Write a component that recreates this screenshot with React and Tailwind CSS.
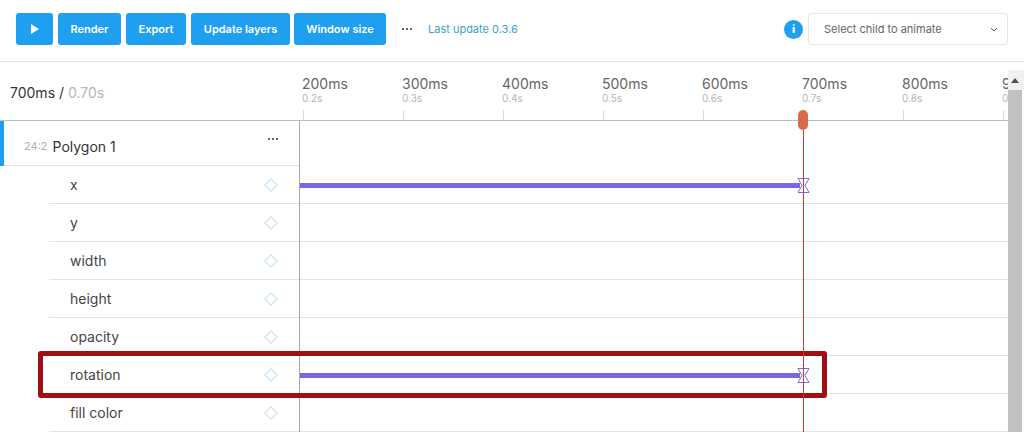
const ticks = [
  ["200ms", "0.2s"],
  ["300ms", "0.3s"],
  ["400ms", "0.4s"],
  ["500ms", "0.5s"],
  ["600ms", "0.6s"],
  ["700ms", "0.7s"],
  ["800ms", "0.8s"],
  ["900ms", "0.9s"],
];
const props = [
  ["x", true],
  ["y", false],
  ["width", false],
  ["height", false],
  ["opacity", false],
  ["rotation", true],
  ["fill color", false],
];

function Btn({ children, className }) {
  return (
    <button className={"h-8 rounded-[3px] bg-[#1f9ff0] text-white text-[11px] font-semibold flex items-center justify-center " + className}>
      {children}
    </button>
  );
}

function Dots({ className }) {
  return (
    <div className={"flex gap-[2px] " + className}>
      <span className="w-[2px] h-[2px] rounded-full bg-[#333]" />
      <span className="w-[2px] h-[2px] rounded-full bg-[#333]" />
      <span className="w-[2px] h-[2px] rounded-full bg-[#333]" />
    </div>
  );
}

function Diamond() {
  return (
    <svg width="14" height="14" viewBox="0 0 14 14" className="mr-[21px] shrink-0">
      <path d="M7 .8 13.2 7 7 13.2 .8 7Z" fill="none" stroke="#c5e2f2" strokeWidth="1.1" />
    </svg>
  );
}

function Track({ active }) {
  return (
    <div className="h-[38px] border-b border-[#e2e2e2] flex items-center relative">
      {active && (
        <>
          <div className="w-[500px] h-[5px] mt-[1px] bg-[#7b68e0]" />
          <svg width="13" height="15" viewBox="0 0 13 15" className="absolute left-[497px] top-[12px]">
            <path d="M1 .5H12L8 7.5 12 14.5H1L5 7.5Z" fill="#fff" stroke="#7b68e0" strokeWidth="1" />
          </svg>
        </>
      )}
    </div>
  );
}

export default function App() {
  return (
    <div className="w-[1024px] h-[432px] relative overflow-hidden bg-white font-['Inter',sans-serif]">
      <div className="h-[62px] border-b border-[#e4e4e4] flex items-center pl-4 pr-4 pb-[3px]">
        <Btn className="w-[37px]">
          <svg width="8" height="10" viewBox="0 0 8 10"><path d="M0 0 8 5 0 10Z" fill="#fff" /></svg>
        </Btn>
        <Btn className="w-[63px] ml-[5px]">Render</Btn>
        <Btn className="w-[60px] ml-[5px]">Export</Btn>
        <Btn className="w-[99px] ml-[5px]">Update layers</Btn>
        <Btn className="w-[92px] ml-[4px]">Window size</Btn>
        <Dots className="ml-[16px]" />
        <span className="ml-[16px] text-[11px] text-[#3aa3d0]">Last update 0.3.6</span>
        <div className="ml-auto w-[19px] h-[19px] rounded-full bg-[#1f9ff0] text-white text-[11px] font-extrabold flex items-center justify-center">i</div>
        <div className="ml-[5px] w-[200px] h-[32px] border border-[#e6e6e6] rounded-[3px] flex items-center justify-between pl-[15px] pr-[9px] text-[11px] text-[#666]">
          <span>Select child to animate</span>
          <svg width="8" height="5" viewBox="0 0 8 5"><path d="M1 1 4 4 7 1" fill="none" stroke="#555" strokeWidth="1" /></svg>
        </div>
      </div>

      <div className="flex h-[370px]">
        <div className="w-[1008px] overflow-hidden">
          <div className="h-[59px] border-b border-[#bdbdbd] flex">
            <div className="w-[300px] shrink-0 pl-[10px] pt-[22px] text-[14px] leading-[17px] text-[#333]">
              700ms / <span className="text-[#b5b5b5]">0.70s</span>
            </div>
            <div className="flex pl-[2px]">
              {ticks.map(([a, b]) => (
                <div key={a} className="w-[100px] shrink-0 relative pt-[13px]">
                  <div className="text-[14px] leading-[17px] text-[#666]">{a}</div>
                  <div className="text-[10px] leading-[12px] text-[#b5b5b5]">{b}</div>
                  <div className="absolute left-[1px] bottom-0 w-[1px] h-[10px] bg-[#dcdcdc]" />
                </div>
              ))}
            </div>
          </div>
          <div className="flex">
            <div className="w-[300px] shrink-0 border-r border-[#a8a8a8]">
              <div className="h-[45px] border-b border-[#e2e2e2] flex items-center relative pl-[24px] pt-[7px]">
                <div className="absolute left-0 top-0 w-[4px] h-[45px] bg-[#1f9ff0]" />
                <span className="text-[11px] text-[#b0b0b0] mr-[5px]">24:2</span>
                <span className="text-[14px] text-[#333]">Polygon 1</span>
                <Dots className="absolute right-[21px] top-[17px]" />
              </div>
              {props.map(([name]) => (
                <div key={name} className="ml-[49px] h-[38px] border-b border-[#e2e2e2] flex items-center justify-between pl-[21px] text-[14px] text-[#444]">
                  <span>{name}</span>
                  <Diamond />
                </div>
              ))}
            </div>
            <div className="flex-1 pt-[45px]">
              {props.map(([name, active]) => (
                <Track key={name} active={active} />
              ))}
            </div>
          </div>
        </div>
        <div className="flex-1 pt-[8px] flex flex-col">
          <div className="h-[20px] bg-[#f1f1f1] flex items-center justify-center">
            <svg width="8" height="5" viewBox="0 0 8 5" className="mr-[2px]"><path d="M4 0 8 5H0Z" fill="#505050" /></svg>
          </div>
          <div className="flex-1 bg-[#c1c1c1] mr-[2px]" />
        </div>
      </div>

      <div className="absolute left-[803px] top-[130px] h-[302px] w-[1px] bg-[#cc3a3f] z-10" />
      <div className="absolute left-[798px] top-[110px] w-[10px] h-[20px] rounded-[5px] bg-[#d96a4e]" />
      <div className="absolute left-[38px] top-[351px] w-[789px] h-[47px] border-[5px] border-[#a00f14] rounded-[3px]" />
    </div>
  );
}
